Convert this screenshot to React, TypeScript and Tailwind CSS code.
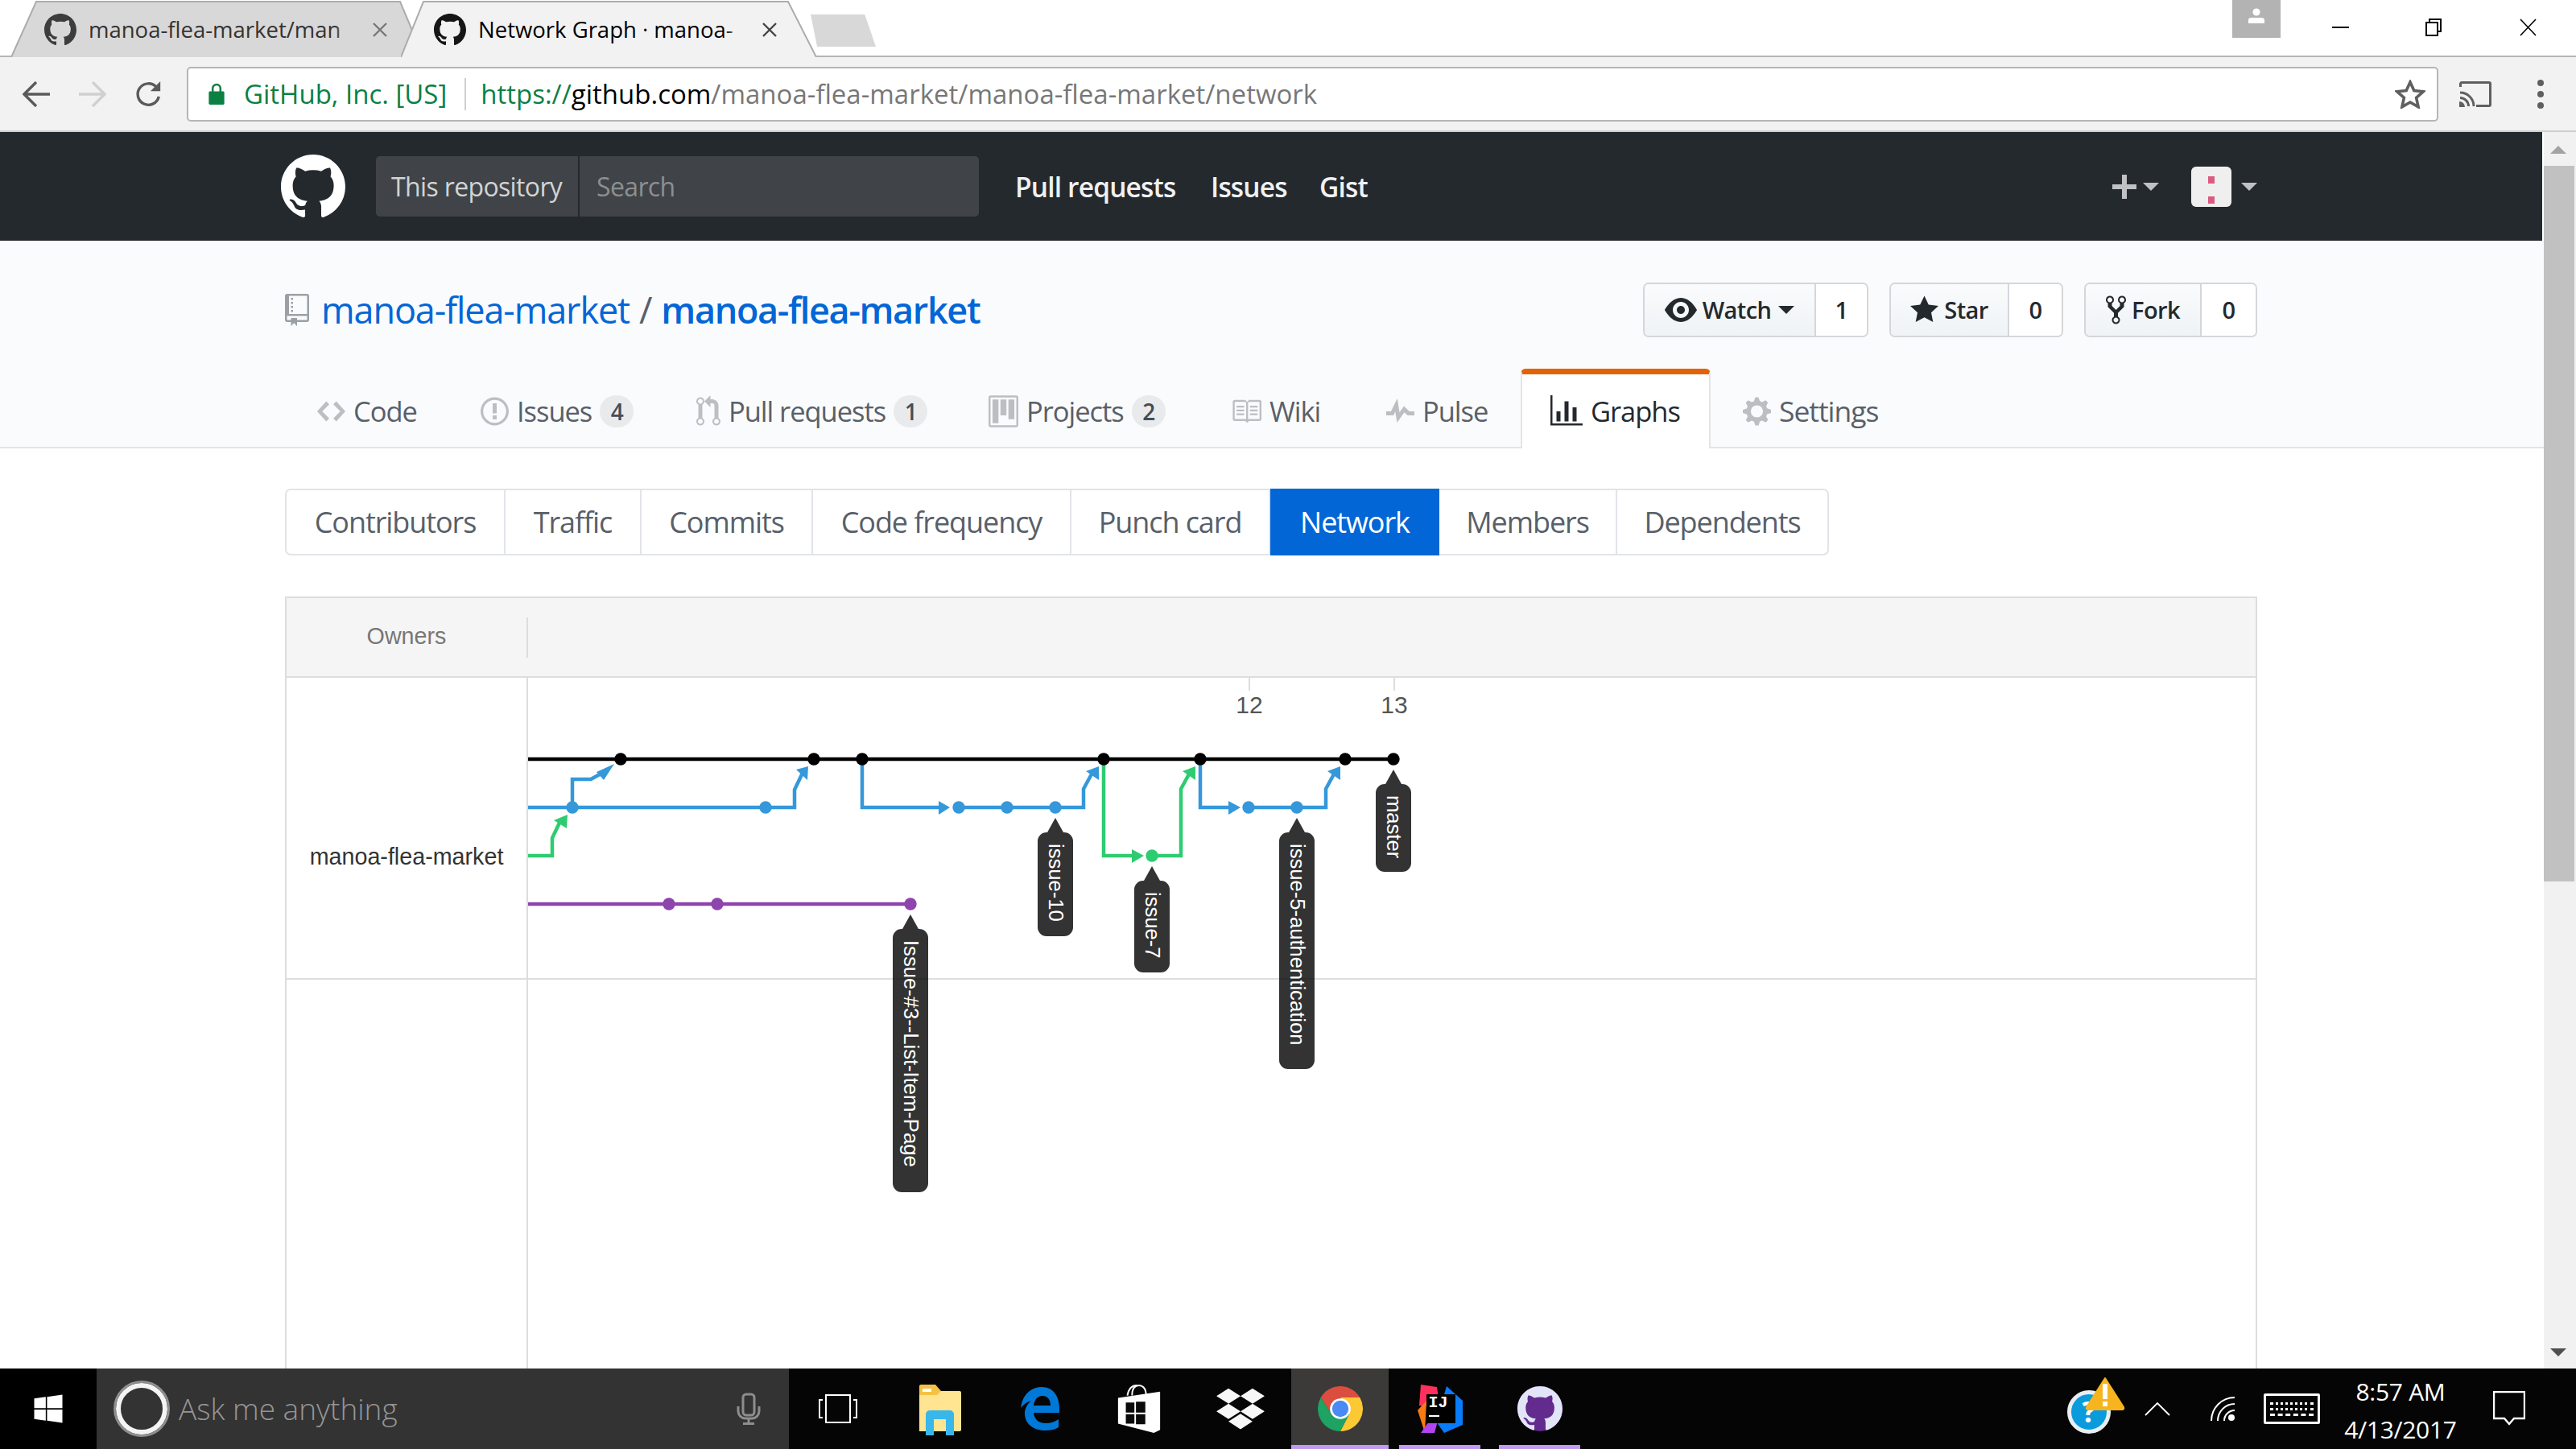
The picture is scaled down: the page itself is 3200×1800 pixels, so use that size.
import { FaDropbox, FaWindows } from "react-icons/fa";

const GITHUB_MARK =
  "M8 0C3.58 0 0 3.58 0 8c0 3.54 2.29 6.53 5.47 7.59.4.07.55-.17.55-.38 0-.19-.01-.82-.01-1.49-2.01.37-2.53-.49-2.69-.94-.09-.23-.48-.94-.82-1.13-.28-.15-.68-.52-.01-.53.63-.01 1.08.58 1.23.82.72 1.21 1.87.87 2.33.66.07-.52.28-.87.51-1.07-1.78-.2-3.64-.89-3.64-3.95 0-.87.31-1.59.82-2.15-.08-.2-.36-1.02.08-2.12 0 0 .67-.21 2.2.82.64-.18 1.32-.27 2-.27.68 0 1.36.09 2 .27 1.53-1.04 2.2-.82 2.2-.82.44 1.1.16 1.92.08 2.12.51.56.82 1.27.82 2.15 0 3.07-1.87 3.75-3.65 3.95.29.25.54.73.54 1.48 0 1.07-.01 1.93-.01 2.2 0 .21.15.46.55.38A8.013 8.013 0 0016 8c0-4.42-3.58-8-8-8z";

const icons: Record<string, { w: number; d: string }> = {
  repo: {
    w: 12,
    d: "M4 9H3V8h1v1zm0-3H3v1h1V6zm0-2H3v1h1V4zm0-2H3v1h1V2zm8-1v12c0 .55-.45 1-1 1H6v2l-1.5-1.5L3 16v-2H1c-.55 0-1-.45-1-1V1c0-.55.45-1 1-1h10c.55 0 1 .45 1 1zm-1 10H1v2h2v-1h3v1h5v-2zm0-10H2v9h9V1z",
  },
  code: { w: 14, d: "M9.5 3L8 4.5 11.5 8 8 11.5 9.5 13 14 8 9.5 3zm-5 0L0 8l4.5 5L6 11.5 2.5 8 6 4.5 4.5 3z" },
  issue: {
    w: 14,
    d: "M7 2.3c3.14 0 5.7 2.56 5.7 5.7s-2.56 5.7-5.7 5.7A5.71 5.71 0 0 1 1.3 8c0-3.14 2.56-5.7 5.7-5.7zM7 1C3.14 1 0 4.14 0 8s3.14 7 7 7 7-3.14 7-7-3.14-7-7-7zm1 3H6v5h2V4zm0 6H6v2h2v-2z",
  },
  pr: {
    w: 12,
    d: "M11 11.28V5c-.03-.78-.34-1.47-.94-2.06C9.46 2.35 8.78 2.03 8 2H7V0L4 3l3 3V4h1c.27.02.48.11.69.31.21.2.3.42.31.69v6.28A1.993 1.993 0 0 0 10 15a1.993 1.993 0 0 0 1-3.72zm-1 2.92c-.66 0-1.2-.55-1.2-1.2 0-.65.55-1.2 1.2-1.2.65 0 1.2.55 1.2 1.2 0 .65-.55 1.2-1.2 1.2zM4 3c0-1.11-.89-2-2-2a1.993 1.993 0 0 0-1 3.72v6.56A1.993 1.993 0 0 0 2 15a1.993 1.993 0 0 0 1-3.72V4.72c.59-.34 1-.98 1-1.72zm-.8 10c0 .66-.55 1.2-1.2 1.2-.65 0-1.2-.55-1.2-1.2 0-.65.55-1.2 1.2-1.2.65 0 1.2.55 1.2 1.2zM2 4.2C1.34 4.2.8 3.65.8 3c0-.65.55-1.2 1.2-1.2.65 0 1.2.55 1.2 1.2 0 .65-.55 1.2-1.2 1.2z",
  },
  project: {
    w: 15,
    d: "M10 12h3V2h-3v10zm-4-2h3V2H6v8zm-4 4h3V2H2v12zm-1 1h13V1H1v14zM14 0H1a1 1 0 0 0-1 1v14a1 1 0 0 0 1 1h13a1 1 0 0 0 1-1V1a1 1 0 0 0-1-1z",
  },
  book: {
    w: 16,
    d: "M3 5h4v1H3V5zm0 3h4V7H3v1zm0 2h4V9H3v1zm11-5h-4v1h4V5zm0 2h-4v1h4V7zm0 2h-4v1h4V9zm2-6v9c0 .55-.45 1-1 1H9.5l-1 1-1-1H2c-.55 0-1-.45-1-1V3c0-.55.45-1 1-1h5.5l1 1 1-1H15c.55 0 1 .45 1 1zm-8 .5L7.5 3H2v9h6V3.5zm7-.5H9.5l-.5.5V12h6V3z",
  },
  pulse: { w: 14, d: "M11.5 8L8.8 5.4 6.6 8.5 5.5 1.6 2.38 8H0v2h3.6l.9-1.8.9 5.4L9 8.5l1.6 1.5H14V8z" },
  graph: { w: 16, d: "M16 14v1H0V0h1v14h15zM5 13H3V8h2v5zm4 0H7V3h2v10zm4 0h-2V6h2v7z" },
  gear: {
    w: 14,
    d: "M14 8.77v-1.6l-1.94-.64-.45-1.09.88-1.84-1.13-1.13-1.81.91-1.09-.45-.69-1.92h-1.6l-.63 1.94-1.11.45-1.84-.88-1.13 1.13.91 1.81-.45 1.09L0 7.23v1.59l1.94.64.45 1.09-.88 1.84 1.13 1.13 1.81-.91 1.09.45.69 1.92h1.59l.63-1.94 1.11-.45 1.84.88 1.13-1.13-.92-1.81.47-1.09L14 8.75v.02zM7 11c-1.66 0-3-1.34-3-3s1.34-3 3-3 3 1.34 3 3-1.34 3-3 3z",
  },
  eye: {
    w: 16,
    d: "M8.06 2C3 2 0 8 0 8s3 6 8.06 6C13 14 16 8 16 8s-3-6-7.94-6zM8 12c-2.2 0-4-1.78-4-4 0-2.2 1.8-4 4-4 2.22 0 4 1.8 4 4 0 2.22-1.78 4-4 4zm2-4c0 1.11-.89 2-2 2-1.11 0-2-.89-2-2 0-1.11.89-2 2-2 1.11 0 2 .89 2 2z",
  },
  star: { w: 14, d: "M14 6l-4.9-.64L7 1 4.9 5.36 0 6l3.6 3.26L2.67 14 7 11.67 11.33 14l-.93-4.74L14 6z" },
  fork: {
    w: 10,
    d: "M8 1a1.993 1.993 0 0 0-1 3.72V6L5 8 3 6V4.72A1.993 1.993 0 0 0 2 1a1.993 1.993 0 0 0-1 3.72V6.5l3 3v1.78A1.993 1.993 0 0 0 5 15a1.993 1.993 0 0 0 1-3.72V9.5l3-3V4.72A1.993 1.993 0 0 0 8 1zM2 4.2C1.34 4.2.8 3.65.8 3c0-.65.55-1.2 1.2-1.2.65 0 1.2.55 1.2 1.2 0 .65-.55 1.2-1.2 1.2zm3 10c-.66 0-1.2-.55-1.2-1.2 0-.65.55-1.2 1.2-1.2.65 0 1.2.55 1.2 1.2 0 .65-.55 1.2-1.2 1.2zm3-10c-.66 0-1.2-.55-1.2-1.2 0-.65.55-1.2 1.2-1.2.65 0 1.2.55 1.2 1.2 0 .65-.55 1.2-1.2 1.2z",
  },
};

const Oct = ({ name, className }: { name: string; className?: string }) => (
  <svg viewBox={`0 0 ${icons[name].w} 16`} className={className} fill="currentColor">
    <path fillRule="evenodd" d={icons[name].d} />
  </svg>
);

const Mark = ({ className }: { className?: string }) => (
  <svg viewBox="0 0 16 16" className={className} fill="currentColor">
    <path fillRule="evenodd" d={GITHUB_MARK} />
  </svg>
);

const BrowserTab = ({
  title,
  active,
  width,
  points,
}: {
  title: string;
  active?: boolean;
  width: string;
  points: string;
}) => {
  const fill = active ? "#f2f2f2" : "#d8d8d8";
  return (
    <div className={`relative h-[71px] ${width} ${active ? "z-10 -ml-[28px]" : ""}`}>
      <svg className="absolute inset-0 h-full w-full">
        <polyline points={points} fill={fill} stroke="#acacac" strokeWidth="2" />
      </svg>
      <div className="relative flex h-[71px] items-center pt-[3px] pl-[41px]">
        <Mark className={`h-[40px] w-[40px] ${active ? "text-[#161616]" : "text-[#3d3d3d]"}`} />
        <div
          className={`relative ml-[15px] w-[335px] whitespace-nowrap text-[27.5px] ${
            active ? "text-black" : "text-[#333]"
          }`}
        >
          {title}
          <div
            className={`absolute inset-y-0 right-0 w-[30px] bg-gradient-to-r from-transparent ${
              active ? "to-[#f2f2f2]" : "to-[#d8d8d8]"
            }`}
          />
        </div>
        <svg viewBox="0 0 20 20" className="ml-[17px] h-[20px] w-[20px]" stroke={active ? "#444" : "#777"} strokeWidth="2.4">
          <path d="M2 2l16 16M18 2L2 18" />
        </svg>
      </div>
    </div>
  );
};

const TabStrip = () => (
  <div className="relative flex h-[71px] shrink-0 border-b-2 border-[#b5b5b5] bg-white pl-[14px]">
    <BrowserTab title="manoa-flea-market/man" width="w-[512px]" points="0,71 31,2 483,2 512,71" />
    <BrowserTab title="Network Graph · manoa-" active width="w-[516px]" points="0,71 28,2 481,2 516,71" />
    <div className="ml-[-7px] mt-[18px] h-[40px] w-[81px] bg-[#d8d8d8] [clip-path:polygon(0_0,83%_0,100%_100%,10%_100%)]" />
    <div className="absolute left-[2773px] top-0 flex h-[47px] w-[60px] justify-center bg-[#b3b3b3] pt-[9px]">
      <svg viewBox="0 0 20 20" className="h-[20px] w-[20px]" fill="#fff">
        <circle cx="10" cy="6" r="4.6" />
        <path d="M0 20v-4q0-3 4-3h12q4 0 4 3v4z" />
      </svg>
    </div>
    <div className="ml-auto flex h-[68px] items-start pt-[23px]">
      <div className="flex w-[115px] justify-center">
        <div className="mt-[10px] h-[2px] w-[21px] bg-black" />
      </div>
      <div className="flex w-[115px] justify-center">
        <svg viewBox="0 0 20 22" className="h-[22px] w-[20px]" fill="none" stroke="#000" strokeWidth="2">
          <rect x="1" y="5" width="14" height="16" fill="#fff" />
          <path d="M5 5V1h14v15h-4" />
        </svg>
      </div>
      <div className="flex w-[120px] justify-center">
        <svg viewBox="0 0 21 22" className="h-[22px] w-[21px]" stroke="#000" strokeWidth="1.6">
          <path d="M1 1l19 20M20 1L1 21" />
        </svg>
      </div>
    </div>
  </div>
);

const Toolbar = () => (
  <div className="flex h-[93px] shrink-0 items-center border-b-2 border-[#cfcfcf] bg-[#f2f2f2]">
    <div className="flex w-[232px] items-center pl-[28px]">
      <svg viewBox="0 0 34 32" className="h-[32px] w-[34px]" fill="none" stroke="#5a5a5a" strokeWidth="3.4">
        <path d="M34 16H3M17 1L2 16l15 15" />
      </svg>
      <svg viewBox="0 0 34 32" className="ml-[36px] h-[32px] w-[34px]" fill="none" stroke="#d0d0d0" strokeWidth="3.4">
        <path d="M0 16h31M17 1l15 15-15 15" />
      </svg>
      <svg viewBox="0 0 36 36" className="ml-[36px] h-[34px] w-[34px]" fill="none" stroke="#5a5a5a" strokeWidth="3.6">
        <path d="M31 21a14 14 0 1 1-3-12" />
        <path d="M33 1v13H20z" fill="#5a5a5a" stroke="none" />
      </svg>
    </div>
    <div className="flex h-[68px] flex-1 items-center rounded-[5px] border-2 border-[#b5b5b5] bg-white text-[33px]">
      <svg viewBox="0 0 20 28" className="ml-[25px] h-[27px] w-[20px]">
        <path d="M5 12V7a5 5 0 0 1 10 0v5" fill="none" stroke="#0b8043" strokeWidth="2.6" />
        <rect y="11" width="20" height="17" rx="1.5" fill="#0b8043" />
      </svg>
      <span className="ml-[24px] text-[#0b8043]">GitHub, Inc. [US]</span>
      <div className="ml-[22px] mr-[18px] h-[40px] w-[2px] bg-[#cfcfcf]" />
      <span className="text-[#0b8043]">https://</span>
      <span className="text-black">github.com</span>
      <span className="text-[#777]">/manoa-flea-market/manoa-flea-market/network</span>
      <svg viewBox="0 0 38 36" className="ml-auto mr-[14px] h-[36px] w-[38px]" fill="none" stroke="#5f5f5f" strokeWidth="3.6">
        <path d="M19 3l4.8 10.6 11.4 1.2-8.6 7.7 2.5 11.3L19 28l-10.1 5.8 2.5-11.3-8.6-7.7 11.4-1.2z" />
      </svg>
    </div>
    <div className="flex w-[171px] items-center">
      <svg viewBox="0 0 40 32" className="ml-[26px] h-[32px] w-[40px]" fill="none" stroke="#5f5f5f" strokeWidth="3">
        <path d="M1.5 7V3A1.5 1.5 0 0 1 3 1.500h34A1.500 1.500 0 0 1 38.500 3v26a1.500 1.500 0 0 1-1.500 1.500H21" />
        <path d="M1 14a17 17 0 0 1 17 17M1 20.500a10.500 10.500 0 0 1 10.500 10.500" />
        <path d="M0 25a7 7 0 0 1 7 7H0z" fill="#5f5f5f" stroke="none" />
      </svg>
      <div className="ml-[57px] flex flex-col gap-[6px]">
        <div className="h-[8px] w-[8px] rounded-full bg-[#5f5f5f]" />
        <div className="h-[8px] w-[8px] rounded-full bg-[#5f5f5f]" />
        <div className="h-[8px] w-[8px] rounded-full bg-[#5f5f5f]" />
      </div>
    </div>
  </div>
);

const Caret = ({ className }: { className?: string }) => (
  <svg viewBox="0 0 20 10" className={`h-[10px] w-[20px] ${className ?? ""}`} fill="currentColor">
    <path d="M0 0h20L10 10z" />
  </svg>
);

const SiteHeader = () => (
  <div className="mr-[2px] flex h-[135px] shrink-0 items-center bg-[#24292e] text-[#fff]">
    <Mark className="ml-[349px] h-[80px] w-[80px] text-white" />
    <div className="ml-[38px] flex h-[75px] w-[749px] items-center rounded-[5px] bg-[#404448] text-[32px] tracking-[-0.02em]">
      <div className="flex h-full w-[253px] items-center border-r-2 border-[#24292e] pl-[19px] text-[#d2d3d4]">
        This repository
      </div>
      <div className="pl-[21px] text-[#8c8f91]">Search</div>
    </div>
    <div className="ml-[45px] mt-[2px] flex text-[33.5px] font-semibold tracking-[-0.025em] text-[#f0f1f1]">
      <span className="w-[243px]">Pull requests</span>
      <span className="w-[135px]">Issues</span>
      <span>Gist</span>
    </div>
    <div className="ml-auto flex items-center text-[#bfc1c3]">
      <svg viewBox="0 0 30 30" className="h-[30px] w-[30px]" fill="currentColor">
        <path d="M12 0h6v12h12v6H18v12h-6V18H0v-6h12z" />
      </svg>
      <Caret className="ml-[8px]" />
      <div className="relative ml-[40px] h-[50px] w-[50px] rounded-[6px] bg-[#efefef]">
        <div className="absolute left-[21px] top-[12px] h-[9px] w-[8px] bg-[#dc5a82]" />
        <div className="absolute left-[21px] top-[37px] h-[9px] w-[8px] bg-[#dc5a82]" />
      </div>
      <Caret className="ml-[12px] mr-[354px]" />
    </div>
  </div>
);

const ActionButton = ({
  icon,
  iconClass,
  label,
  count,
  btnWidth,
  countWidth,
  caret,
}: {
  icon: string;
  iconClass: string;
  label: string;
  count: string;
  btnWidth: string;
  countWidth: string;
  caret?: boolean;
}) => (
  <div className="flex h-[68px] rounded-[7px] border-2 border-[#d4d7da] text-[29px] tracking-[-0.02em] text-[#24292e]">
    <div
      className={`flex items-center justify-center gap-[7px] rounded-l-[5px] border-r-2 border-[#d4d7da] bg-gradient-to-b from-[#fafbfc] to-[#eff3f6] font-semibold ${btnWidth}`}
    >
      <Oct name={icon} className={iconClass} />
      {label}
      {caret && <Caret className="ml-[2px] text-[#24292e]" />}
    </div>
    <div className={`flex items-center justify-center rounded-r-[5px] bg-white font-semibold ${countWidth}`}>{count}</div>
  </div>
);

const repoTabs = [
  { icon: "code", iconClass: "h-[40px] w-[35px]", label: "Code", width: "w-[203px]" },
  { icon: "issue", iconClass: "h-[40px] w-[35px]", label: "Issues", count: "4", width: "w-[268px]" },
  { icon: "pr", iconClass: "h-[40px] w-[30px]", label: "Pull requests", count: "1", width: "w-[363px]" },
  { icon: "project", iconClass: "h-[40px] w-[37px]", label: "Projects", count: "2", width: "w-[301px]" },
  { icon: "book", iconClass: "h-[40px] w-[38px]", label: "Wiki", width: "w-[193px]" },
  { icon: "pulse", iconClass: "h-[40px] w-[35px]", label: "Pulse", width: "w-[204px]" },
];

const RepoHead = () => (
  <div className="flex h-[258px] shrink-0 flex-col justify-between border-b-2 border-[#e1e4e8] bg-[#fafbfc]">
    <div className="ml-[354px] flex w-[2450px] justify-between pt-[52px]">
      <div className="flex h-[68px] items-center text-[45px] tracking-[-0.025em] text-[#0366d6]">
        <Oct name="repo" className="h-[40px] w-[30px] text-[#9aa0a6]" />
        <span className="ml-[15px]">manoa-flea-market</span>
        <span className="mx-[12px] text-[#586069]">/</span>
        <span className="font-semibold tracking-[-0.03em]">manoa-flea-market</span>
      </div>
      <div className="flex gap-[26px]">
        <ActionButton icon="eye" iconClass="h-[40px] w-[40px]" label="Watch" count="1" btnWidth="w-[213px]" countWidth="w-[63px]" caret />
        <ActionButton icon="star" iconClass="h-[40px] w-[35px]" label="Star" count="0" btnWidth="w-[147px]" countWidth="w-[65px]" />
        <ActionButton icon="fork" iconClass="h-[40px] w-[25px]" label="Fork" count="0" btnWidth="w-[144px]" countWidth="w-[67px]" />
      </div>
    </div>
    <div className="-mb-[2px] ml-[354px] flex h-[99px] w-[2450px] pl-[3px] text-[34.5px] tracking-[-0.03em] text-[#586069]">
      {repoTabs.map((t) => (
        <div key={t.label} className={`flex items-center pl-[37px] pt-[6px] ${t.width}`}>
          <Oct name={t.icon} className={`${t.iconClass} text-[#bcbfc2]`} />
          <span className="ml-[10px]">{t.label}</span>
          {t.count && (
            <span className="ml-[10px] flex h-[40px] w-[42px] items-center justify-center rounded-full bg-[#e9eaec] text-[28px] font-semibold text-[#444d56]">
              {t.count}
            </span>
          )}
        </div>
      ))}
      <div className="flex w-[236px] items-center rounded-t-[6px] border-x-2 border-t-[7px] border-[#e1e4e8] border-t-[#e36209] bg-white pl-[35px] text-[#24292e]">
        <Oct name="graph" className="h-[40px] w-[40px]" />
        <span className="ml-[10px]">Graphs</span>
      </div>
      <div className="flex items-center pl-[40px] pt-[6px]">
        <Oct name="gear" className="h-[40px] w-[35px] text-[#bcbfc2]" />
        <span className="ml-[10px] text-[35.5px]">Settings</span>
      </div>
    </div>
  </div>
);

const graphTabs = [
  { label: "Contributors", width: "w-[274px]" },
  { label: "Traffic", width: "w-[169px]" },
  { label: "Commits", width: "w-[213px]" },
  { label: "Code frequency", width: "w-[321px]" },
  { label: "Punch card", width: "w-[247px]" },
  { label: "Network", width: "w-[210px]", active: true },
  { label: "Members", width: "w-[221px]" },
  { label: "Dependents", width: "w-[263px]" },
];

const GraphNav = () => (
  <div className="ml-[354px] mt-[50px] flex h-[83px] w-[2450px] text-[36px] font-medium tracking-[-0.03em] text-[#586069]">
    {graphTabs.map((t, i) => (
      <div
        key={t.label}
        className={`flex items-center justify-center border-y-2 ${t.width} ${
          t.active ? "border-[#0366d6] bg-[#0366d6] text-white" : "border-[#e1e4e8] border-r-2"
        } ${i === 0 ? "rounded-l-[7px] border-l-2" : ""} ${i === graphTabs.length - 1 ? "rounded-r-[7px]" : ""}`}
      >
        {t.label}
      </div>
    ))}
  </div>
);

const Dot = ({ x, y, fill }: { x: number; y: number; fill: string }) => (
  <circle cx={x} cy={y} r="7.7" fill={fill} />
);

const Label = ({ x, top, bottom, text }: { x: number; top: number; bottom: number; text: string }) => (
  <g>
    <path
      d={`M${x} ${top - 18}L${x + 10} ${top}h1a11 11 0 0 1 11 11V${bottom - 11}a11 11 0 0 1-11 11H${x - 11}a11 11 0 0 1-11-11V${top + 11}a11 11 0 0 1 11-11h1z`}
      fill="#000"
      fillOpacity="0.8"
    />
    <text
      transform={`translate(${x - 8} ${top + 14}) rotate(90)`}
      fontSize="25.6"
      fill="#fff"
      fontFamily="'Liberation Sans', sans-serif"
    >
      {text}
    </text>
  </g>
);

const BLUE = "#3498db";
const GREEN = "#2ecc71";
const PURPLE = "#8e44ad";

const Arrow = ({ d, color, tip }: { d: string; color: string; tip: string }) => (
  <g>
    <path d={d} fill="none" stroke={color} strokeWidth="4.5" />
    <polygon points={tip} fill={color} />
  </g>
);

const NetworkSvg = () => (
  <svg viewBox="656 841 1200 700" className="absolute left-0 top-0 h-[700px] w-[1200px]">
    <path d="M1552 841v16M1732 841v16" stroke="#ddd" strokeWidth="2" />
    <g fontFamily="'Liberation Sans', sans-serif" fontSize="30" fill="#555" textAnchor="middle">
      <text x="1552" y="885">12</text>
      <text x="1732" y="885">13</text>
    </g>

    <path d="M656 942H1731" stroke="#000" strokeWidth="4.5" />
    <path d="M656 1122H1131" stroke={PURPLE} strokeWidth="4.5" />
    <path d="M656 1002H951M1191 1002H1311M1551 1002H1611" stroke={BLUE} strokeWidth="4.5" />

    <Arrow d="M656 1062H686V1040L697 1017" color={GREEN} tip="705,1011 688,1018 704,1028" />
    <Arrow d="M711 1002V967H734L754 956" color={BLUE} tip="763,948 741,958 750,968" />
    <Arrow d="M951 1002H987V980L998 957" color={BLUE} tip="1004,951 989,955 1003,968" />
    <Arrow d="M1071 942V1002H1170" color={BLUE} tip="1180,1002 1166,994 1166,1011" />
    <Arrow d="M1311 1002H1346V979L1358 957" color={BLUE} tip="1365,951 1349,957 1365,968" />
    <Arrow d="M1371 942V1062H1410" color={GREEN} tip="1421,1062 1406,1054 1406,1071" />
    <Arrow d="M1431 1062H1467V979L1479 957" color={GREEN} tip="1485,951 1469,957 1485,968" />
    <Arrow d="M1491 942V1002H1530" color={BLUE} tip="1541,1002 1526,994 1526,1011" />
    <Arrow d="M1611 1002H1647V979L1659 957" color={BLUE} tip="1665,951 1649,957 1665,968" />

    {[771, 1011, 1071, 1371, 1491, 1671, 1731].map((x) => (
      <Dot key={x} x={x} y={942} fill="#000" />
    ))}
    {[711, 951, 1191, 1251, 1311, 1551, 1611].map((x) => (
      <Dot key={x} x={x} y={1002} fill={BLUE} />
    ))}
    <Dot x={1431} y={1062} fill={GREEN} />
    {[831, 891, 1131].map((x) => (
      <Dot key={x} x={x} y={1122} fill={PURPLE} />
    ))}

    <Label x={1131} top={1153} bottom={1480} text="Issue-#3--List-Item-Page" />
    <Label x={1311} top={1033} bottom={1162} text="issue-10" />
    <Label x={1431} top={1093} bottom={1207} text="issue-7" />
    <Label x={1611} top={1033} bottom={1327} text="issue-5-authentication" />
    <Label x={1731} top={973} bottom={1082} text="master" />
  </svg>
);

const NetworkCard = () => (
  <div className="ml-[354px] mt-[51px] w-[2450px] border-x-2 border-t-2 border-[#ddd] font-['Liberation_Sans',sans-serif] text-[28.7px] tracking-normal">
    <div className="flex h-[99px] items-center border-b-2 border-[#ddd] bg-[#f5f5f5]">
      <div className="flex h-[50px] w-[300px] items-center justify-center border-r-2 border-[#ddd] pb-[2px] text-[#777]">Owners</div>
    </div>
    <div className="flex h-[900px]">
      <div className="w-[300px] border-r-2 border-[#ddd]">
        <div className="flex h-[375px] justify-center border-b-2 border-[#ddd] pt-[201px] text-[#333]">manoa-flea-market</div>
      </div>
      <div className="relative flex-1">
        <div className="h-[375px] border-b-2 border-[#ddd]" />
        <NetworkSvg />
      </div>
    </div>
  </div>
);

const Scrollbar = () => (
  <div className="flex w-[40px] shrink-0 flex-col items-center bg-[#f1f1f1] pr-[4px]">
    <svg viewBox="0 0 20 10" className="mt-[17px] h-[10px] w-[20px]" fill="#a3a3a3">
      <path d="M10 0l10 10H0z" />
    </svg>
    <div className="mt-[15px] h-[889px] w-[38px] self-start bg-[#c1c1c1]" />
    <svg viewBox="0 0 20 10" className="mt-auto mb-[15px] h-[10px] w-[20px]" fill="#505050">
      <path d="M0 0h20L10 10z" />
    </svg>
  </div>
);

const EdgeIcon = () => (
  <svg viewBox="0 0 50 54" className="h-[54px] w-[50px]">
    <path
      fillRule="evenodd"
      fill="#0078d7"
      d="M1 26C3 10 13 0 27 0c14 0 22 11 22 27v5H17c1 9 7 13 15 13 6 0 12-2 16-5v10c-5 3-11 4-17 4C16 54 6 45 6 33c0-6 3-12 8-16-6 2-10 5-13 9zM17 23h21c0-8-4-12-10-12-6 0-10 4-11 12z"
    />
  </svg>
);

const StoreIcon = () => (
  <svg viewBox="0 0 54 62" className="h-[60px] w-[54px]">
    <path d="M18 14C18 2 24 1 27 1s9 2 9 13" fill="none" stroke="#fff" strokeWidth="2" />
    <path d="M12 14C14 3 20 1 24 1" fill="none" stroke="#fff" strokeWidth="2" />
    <path d="M0 17l54-8v49l-8 4-46-12z" fill="#fff" />
    <path d="M10 23h11v13H10zM23 22h12v14H23zM10 38h11v12H10zM23 38h12v13H23z" fill="#0a0a0a" />
  </svg>
);

const ExplorerIcon = () => (
  <svg viewBox="0 0 53 66" className="h-[66px] w-[53px]">
    <path d="M1 6a2 2 0 0 1 2-2h16l7 7h25a2 2 0 0 1 2 2v46a2 2 0 0 1-2 2H1z" fill="#ffe491" />
    <path d="M1 5a2 2 0 0 1 2-2h18l7 8-5 5H1z" fill="#f5c242" />
    <path d="M5 8h11v4H5z" fill="#fff" />
    <path d="M9 66V40a5 5 0 0 1 5-5h25a5 5 0 0 1 5 5v26H34V46H19v20z" fill="#39b6ea" />
  </svg>
);

const ChromeIcon = () => (
  <svg viewBox="0 0 48 48" className="h-[56px] w-[56px]">
    <path d="M3.2 12A24 24 0 0 1 44.800 12H24L14.500 29.500z" fill="#db4d3f" />
    <path d="M44.800 12A24 24 0 0 1 24 48L33.500 29.500 24 12z" fill="#fcc934" />
    <path d="M24 48A24 24 0 0 1 3.200 12L14.500 29.500H33.500z" fill="#1ea362" />
    <circle cx="24" cy="24" r="11" fill="#fff" />
    <circle cx="24" cy="24" r="8.7" fill="#4a8af4" />
  </svg>
);

const IdeaIcon = () => (
  <div className="relative h-[60px] w-[62px]">
    <svg viewBox="0 0 62 60" className="absolute inset-0 h-full w-full">
      <polygon points="7,0 27,3 31,30 5,26" fill="#fe315d" />
      <polygon points="3,32 14,20 12,60 5,38" fill="#f97a12" />
      <polygon points="14,50 32,30 24,60 7,60" fill="#b345f1" />
      <polygon points="39,2 59,20 59,50 36,60 26,46" fill="#087cfa" />
    </svg>
    <div className="absolute left-[14px] top-[12px] flex h-[36px] w-[36px] flex-col bg-black px-[3px] font-['Liberation_Mono',monospace] text-[20px] font-bold leading-[22px] text-white">
      <span>IJ</span>
      <span className="mt-[4px] h-[2px] w-[13px] bg-white" />
    </div>
  </div>
);

const GithubDesktopIcon = () => (
  <div className="relative h-[56px] w-[56px] rounded-full bg-[#632b8e]">
    <Mark className="absolute inset-0 h-full w-full text-[#e2e5f7]" />
  </div>
);

const taskItems = [
  { width: "w-[130px]", node: <ExplorerIcon /> },
  { width: "w-[120px]", node: <EdgeIcon /> },
  { width: "w-[126px]", node: <StoreIcon /> },
  { width: "w-[126px]", node: <FaDropbox className="h-[58px] w-[60px] text-[#f7f7f7]" /> },
];

const Taskbar = () => (
  <div className="flex h-[100px] shrink-0 bg-[#060505] font-['Open_Sans',sans-serif]">
    <div className="flex w-[120px] items-center justify-center bg-black">
      <FaWindows className="h-[40px] w-[40px] text-white" />
    </div>
    <div className="flex w-[860px] items-center bg-[#333] text-[#969696]">
      <div className="ml-[24px] h-[64px] w-[64px] rounded-full border-[6px] border-[#f4f4f4] outline-[3px] outline-[#8f8f8f] outline" />
      <span className="ml-[14px] text-[37px] font-light">Ask me anything</span>
      <svg viewBox="0 0 30 40" className="ml-auto mr-[35px] h-[40px] w-[30px]" fill="none" stroke="#8d8d8d" strokeWidth="3">
        <rect x="8" y="2" width="14" height="26" rx="4" />
        <path d="M2 17v6a9 9 0 0 0 9 9h8a9 9 0 0 0 9-9v-6M15 32v6M8 38.500h14" />
      </svg>
    </div>
    <div className="flex w-[122px] items-center justify-center">
      <svg viewBox="0 0 48 36" className="h-[36px] w-[48px]" fill="none" stroke="#fff" strokeWidth="2">
        <rect x="9" y="1" width="30" height="34" />
        <path d="M5 7H1v22h4M43 7h4v22h-4" />
      </svg>
    </div>
    {taskItems.map((t, i) => (
      <div key={i} className={`flex items-center justify-center ${t.width}`}>
        {t.node}
      </div>
    ))}
    <div className="relative flex w-[121px] items-center justify-center bg-[#3b3a39]">
      <ChromeIcon />
      <div className="absolute inset-x-0 bottom-0 h-[5px] bg-[#c09af0]" />
    </div>
    <div className="relative flex w-[127px] items-center justify-center">
      <IdeaIcon />
      <div className="absolute bottom-0 left-[13px] h-[5px] w-[101px] bg-[#c09af0]" />
    </div>
    <div className="relative flex w-[121px] items-center justify-center">
      <GithubDesktopIcon />
      <div className="absolute bottom-0 left-[10px] h-[5px] w-[101px] bg-[#c09af0]" />
    </div>
    <div className="ml-auto flex items-center text-white">
      <div className="relative h-full w-[90px]">
        <div className="absolute left-[8px] top-[27px] flex h-[54px] w-[54px] items-center justify-center rounded-full border-[5px] border-[#e8eef2] bg-[#0a9bdc] text-[36px] font-bold leading-none text-white">
          ?
        </div>
        <svg viewBox="0 0 50 42" className="absolute left-[30px] top-[10px] h-[42px] w-[50px]">
          <path d="M25 2L48 38q1 3-2 3H4q-3 0-2-3z" fill="#f6b51e" stroke="#f6b51e" strokeWidth="2" strokeLinejoin="round" />
          <rect x="22" y="9" width="6" height="19" fill="#fff" />
          <rect x="22" y="31" width="6" height="6" fill="#fff" />
        </svg>
      </div>
      <div className="flex w-[60px] justify-center">
        <svg viewBox="0 0 32 18" className="h-[18px] w-[32px]" fill="none" stroke="#fff" strokeWidth="1.8">
          <path d="M1 17L16 2l15 15" />
        </svg>
      </div>
      <div className="flex w-[102px] justify-center">
        <svg viewBox="0 0 30 30" className="h-[30px] w-[30px]" fill="none" stroke="#fff" strokeWidth="2">
          <path d="M1 30A29 29 0 0 1 30 1M9 30A21 21 0 0 1 30 9M17 30a13 13 0 0 1 13-13" />
          <circle cx="26" cy="26" r="4" fill="#fff" stroke="none" />
        </svg>
      </div>
      <div className="flex h-[38px] w-[70px] flex-col justify-center gap-[4px] rounded-[2px] border-[3px] border-white px-[5px] [&>div]:h-[3px]">
        <div className="border-t-[3px] border-dotted border-white" />
        <div className="border-t-[3px] border-dotted border-white" />
        <div className="border-t-[3px] border-dashed border-white" />
      </div>
      <div className="flex w-[196px] flex-col items-center pl-[4px] pt-[3px] text-[30px] leading-[47px] tracking-[-0.01em]">
        <span>8:57 AM</span>
        <span>4/13/2017</span>
      </div>
      <div className="flex w-[78px] justify-center">
        <svg viewBox="0 0 40 44" className="h-[44px] w-[40px]" fill="none" stroke="#fff" strokeWidth="2.4">
          <path d="M1 1h38v33H26l-6 7-6-7H1z" />
        </svg>
      </div>
      <div className="w-[44px]" />
    </div>
  </div>
);

const App = () => {
  return (
    <div className="flex h-[1800px] w-[3200px] flex-col overflow-hidden bg-white font-['Open_Sans',sans-serif]">
      <TabStrip />
      <Toolbar />
      <div className="flex min-h-0 flex-1">
        <div className="min-w-0 flex-1 overflow-hidden">
          <SiteHeader />
          <RepoHead />
          <GraphNav />
          <NetworkCard />
        </div>
        <Scrollbar />
      </div>
      <Taskbar />
    </div>
  );
};

export default App;
